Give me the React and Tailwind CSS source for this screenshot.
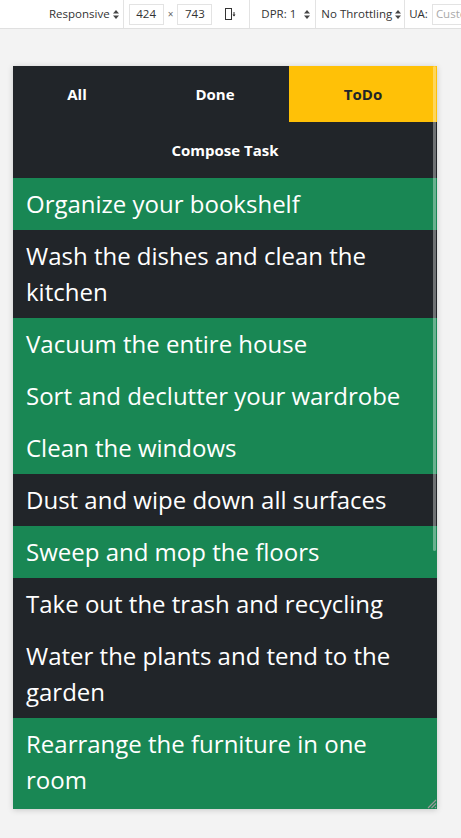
import React from 'react';

const tasks = [
  { text: 'Organize your bookshelf', done: true },
  { text: 'Wash the dishes and clean the kitchen', done: false },
  { text: 'Vacuum the entire house', done: true },
  { text: 'Sort and declutter your wardrobe', done: true },
  { text: 'Clean the windows', done: true },
  { text: 'Dust and wipe down all surfaces', done: false },
  { text: 'Sweep and mop the floors', done: true },
  { text: 'Take out the trash and recycling', done: false },
  { text: 'Water the plants and tend to the garden', done: false },
  { text: 'Rearrange the furniture in one room', done: true },
];

const UpDown = () => (
  <svg width="6" height="9" viewBox="0 0 6 9" className="ml-[3px] shrink-0">
    <path d="M3 0 L6 3.5 H0 Z" fill="#444" />
    <path d="M3 9 L6 5.5 H0 Z" fill="#444" />
  </svg>
);

const Sep = () => <div className="w-px self-stretch bg-[#e3e3e3] shrink-0" />;

const Toolbar = () => (
  <div className="h-[29px] bg-white border-b border-[#e0e0e0] flex items-center text-[11.5px] text-[#333] whitespace-nowrap overflow-hidden" style={{ fontFamily: '"Open Sans", "Noto Sans", sans-serif' }}>
    <div className="flex items-center pl-[49px] pr-[4px] shrink-0">
      <span>Responsive</span>
      <UpDown />
    </div>
    <Sep />
    <div className="flex items-center pl-[5px] pr-[11px] shrink-0">
      <div className="w-[35px] h-[21px] border border-[#e3e3e3] flex items-center justify-center">424</div>
      <span className="mx-[4px] text-[10px] text-[#666]">×</span>
      <div className="w-[35px] h-[21px] border border-[#e3e3e3] flex items-center justify-center">743</div>
      <svg width="14" height="14" viewBox="0 0 14 14" className="ml-[12px]">
        <rect x="1.5" y="1.5" width="6" height="11" fill="none" stroke="#333" strokeWidth="1" />
        <path d="M10 5 V9" stroke="#333" strokeWidth="1" />
        <path d="M8.5 7.5 L10 9.5 L11.5 7.5" fill="#333" />
      </svg>
    </div>
    <Sep />
    <div className="flex items-center pl-[11px] pr-[5px] shrink-0">
      <span>DPR: 1</span>
      <span className="w-[5px]" />
      <UpDown />
    </div>
    <Sep />
    <div className="flex items-center pl-[5px] pr-[3px] shrink-0">
      <span>No Throttling</span>
      <UpDown />
    </div>
    <Sep />
    <div className="flex items-center pl-[4px] shrink-0">
      <span>UA:</span>
      <div className="ml-[4px] w-[90px] h-[21px] border border-[#e3e3e3] flex items-center pl-[3px] text-[#aaa]">Custom...</div>
    </div>
  </div>
);

export default function App() {
  return (
    <div className="min-h-screen bg-[#f3f3f3]" style={{ fontFamily: '"Segoe UI", "Open Sans", "Noto Sans", sans-serif' }}>
      <Toolbar />
      <div className="pt-[37px] pl-[13px]">
        <div className="relative w-[424px] h-[743px] overflow-hidden bg-[#212529] shadow-[0_1px_6px_rgba(0,0,0,0.18)]">
          <div className="flex h-[56px] text-[15px] font-bold">
            <button className="w-[128px] text-white">All</button>
            <button className="flex-1 text-white">Done</button>
            <button className="flex-1 bg-[#ffc107] text-[#212529]">ToDo</button>
          </div>
          <button className="w-full h-[56px] text-[15px] font-bold text-white">Compose Task</button>
          <ul>
            {tasks.map((t) => (
              <li
                key={t.text}
                className={`px-[13px] py-2 last:pb-[12px] text-[24px] leading-[36px] text-white ${t.done ? 'bg-[#198754]' : 'bg-[#212529]'}`}
              >
                {t.text}
              </li>
            ))}
          </ul>
          <div className="absolute top-0 right-[1px] w-[3px] h-[485px] rounded-full bg-white/35" />
          <svg className="absolute bottom-0 right-0" width="12" height="12" viewBox="0 0 12 12">
            <path d="M11 3 L3 11 M11 6.5 L6.5 11 M11 10 L10 11" stroke="#9a9a9a" strokeWidth="1.2" />
          </svg>
        </div>
      </div>
    </div>
  );
}
